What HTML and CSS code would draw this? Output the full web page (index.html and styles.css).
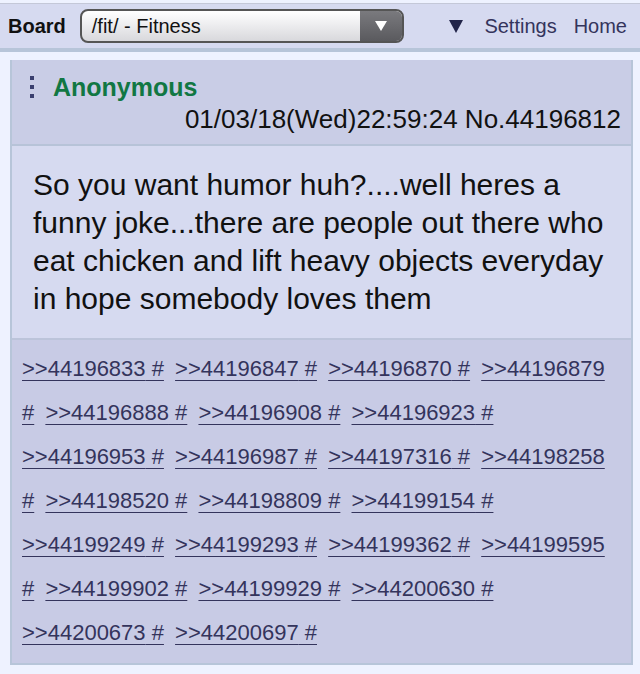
FILE: index.html
```html
<!DOCTYPE html>
<html lang="en">
<head>
    <meta charset="UTF-8">
    <meta name="viewport" content="width=device-width, initial-scale=1.0">
    <title>/fit/ - Fitness</title>
    <link rel="stylesheet" href="styles.css">
</head>
<body>
    <nav class="topbar">
        <span class="board-label">Board</span>
        <div class="board-select">
            <span class="board-name">/fit/ - Fitness</span>
            <span class="select-btn">
                <svg width="14" height="12" viewBox="0 0 14 12"><path d="M1 1 L13 1 L7 11 Z" fill="#fff"/></svg>
            </span>
        </div>
        <div class="nav-links">
            <svg class="nav-arrow" width="14" height="14" viewBox="0 0 14 14"><path d="M0 1 L14 1 L7 14 Z" fill="#22254a"/></svg>
            <a href="#">Settings</a>
            <a href="#">Home</a>
        </div>
    </nav>

    <div class="post">
        <div class="post-head">
            <div class="name-row">
                <span class="menu-dots"><i></i><i></i><i></i></span>
                <span class="name">Anonymous</span>
            </div>
            <div class="date-row">01/03/18(Wed)22:59:24 No.44196812</div>
        </div>

        <div class="post-body">
            So you want humor huh?....well heres a funny joke...there are people out there who eat chicken and lift heavy objects everyday in hope somebody loves them
        </div>

        <div class="backlinks">
            <a href="#">&gt;&gt;44196833</a><a class="hash" href="#"> #</a>
            <a href="#">&gt;&gt;44196847</a><a class="hash" href="#"> #</a>
            <a href="#">&gt;&gt;44196870</a><a class="hash" href="#"> #</a>
            <a href="#">&gt;&gt;44196879</a><a class="hash" href="#"> #</a>
            <a href="#">&gt;&gt;44196888</a><a class="hash" href="#"> #</a>
            <a href="#">&gt;&gt;44196908</a><a class="hash" href="#"> #</a>
            <a href="#">&gt;&gt;44196923</a><a class="hash" href="#"> #</a>
            <a href="#">&gt;&gt;44196953</a><a class="hash" href="#"> #</a>
            <a href="#">&gt;&gt;44196987</a><a class="hash" href="#"> #</a>
            <a href="#">&gt;&gt;44197316</a><a class="hash" href="#"> #</a>
            <a href="#">&gt;&gt;44198258</a><a class="hash" href="#"> #</a>
            <a href="#">&gt;&gt;44198520</a><a class="hash" href="#"> #</a>
            <a href="#">&gt;&gt;44198809</a><a class="hash" href="#"> #</a>
            <a href="#">&gt;&gt;44199154</a><a class="hash" href="#"> #</a>
            <a href="#">&gt;&gt;44199249</a><a class="hash" href="#"> #</a>
            <a href="#">&gt;&gt;44199293</a><a class="hash" href="#"> #</a>
            <a href="#">&gt;&gt;44199362</a><a class="hash" href="#"> #</a>
            <a href="#">&gt;&gt;44199595</a><a class="hash" href="#"> #</a>
            <a href="#">&gt;&gt;44199902</a><a class="hash" href="#"> #</a>
            <a href="#">&gt;&gt;44199929</a><a class="hash" href="#"> #</a>
            <a href="#">&gt;&gt;44200630</a><a class="hash" href="#"> #</a>
            <a href="#">&gt;&gt;44200673</a><a class="hash" href="#"> #</a>
            <a href="#">&gt;&gt;44200697</a><a class="hash" href="#"> #</a>
        </div>
    </div>
</body>
</html>
```

FILE: styles.css
```css
/* yotsuba b look */
body {
    margin: 0;
    padding-top: 3px;
    background-color: #eef2ff;
    font-family: "Liberation Sans", Arial, sans-serif;
    color: #000;
}

.topbar {
    display: flex;
    align-items: center;
    height: 44px;
    padding: 0 13px 0 8px;
    background-color: #d6daf0;
    border-top: 1px solid #c4c8d8;
    border-bottom: 4px solid #b7c5d9;
}

.board-label {
    font-size: 20px;
    font-weight: bold;
    color: #111;
}

.board-select {
    display: flex;
    width: 320px;
    height: 30px;
    margin-left: 14px;
    border: 2px solid #555;
    border-radius: 8px;
    overflow: hidden;
    background: linear-gradient(#fff, #d8d8dc);
}

.board-name {
    flex: 1;
    padding-left: 10px;
    font-size: 20px;
    line-height: 30px;
    color: #111;
}

.select-btn {
    display: flex;
    align-items: center;
    justify-content: center;
    width: 42px;
    background: linear-gradient(#7a7a7e, #5a5a5e);
}

.nav-links {
    display: flex;
    align-items: center;
    margin-left: auto;
    gap: 17px;
    font-size: 20px;
}

.nav-arrow {
    margin-right: 4px;
}

.nav-links a {
    color: #34345c;
    text-decoration: none;
}

.post {
    margin: 8px 7px 0 10px;
    border: 2px solid #b7c5d9;
    border-width: 0 2px 2px 2px;
}

.post-head {
    height: 86px;
    padding: 0 10px 0 18px;
    background-color: #c9cde6;
    border-bottom: 2px solid #b7c3d8;
    box-sizing: border-box;
}

.name-row {
    display: flex;
    align-items: center;
    padding-top: 12px;
    height: 30px;
}

.menu-dots {
    display: flex;
    flex-direction: column;
    gap: 5px;
    width: 23px;
}

.menu-dots i {
    display: block;
    width: 4px;
    height: 4px;
    background-color: #3a3f6e;
}

.name {
    font-size: 25px;
    font-weight: bold;
    color: #117743;
}

.date-row {
    text-align: right;
    font-size: 26px;
    line-height: 34px;
    color: #111;
}

.post-body {
    height: 194px;
    padding: 20px 16px 0 21px;
    box-sizing: border-box;
    background-color: #d6daf0;
    font-size: 30px;
    line-height: 38px;
    color: #111;
    border-bottom: 2px solid #bcc4da;
}

.backlinks {
    padding: 7px 12px 8px 10px;
    background-color: #c8cbe5;
    font-size: 22px;
    line-height: 44px;
}

.backlinks a {
    color: #34345c;
    text-decoration-thickness: 1px;
    text-underline-offset: 4px;
}

.backlinks .hash {
    margin-right: 5px;
}
```
